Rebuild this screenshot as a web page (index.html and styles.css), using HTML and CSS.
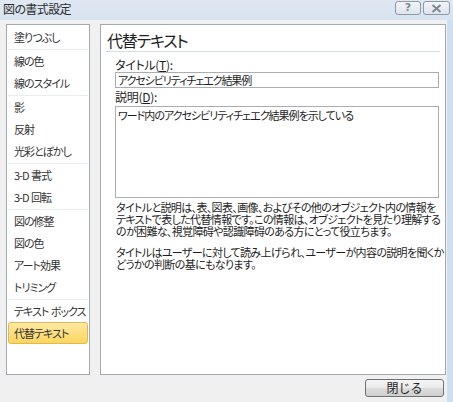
FILE: index.html
```html
<!DOCTYPE html>
<html lang="ja">
<head>
<meta charset="utf-8">
<title>図の書式設定</title>
<link rel="stylesheet" href="styles.css">
</head>
<body>
<div class="window">
  <div class="titlebar">
    <span class="title">図の書式設定</span>
    <div class="ctrls">
      <span class="cbtn help">?</span>
      <span class="cbtn close">
        <svg width="11" height="9" viewBox="0 0 11 9"><path d="M1.5 1 L9.5 8 M9.5 1 L1.5 8" stroke="#7d8894" stroke-width="2" fill="none"/></svg>
      </span>
    </div>
  </div>
  <div class="body">
    <div class="main">
      <nav class="nav">
        <div class="group first">
          <div class="item">塗りつぶし</div>
        </div>
        <div class="group">
          <div class="item">線の色</div>
          <div class="item">線のスタイル</div>
        </div>
        <div class="group">
          <div class="item">影</div>
          <div class="item">反射</div>
          <div class="item">光彩とぼかし</div>
        </div>
        <div class="group">
          <div class="item">3-D 書式</div>
          <div class="item">3-D 回転</div>
        </div>
        <div class="group">
          <div class="item">図の修整</div>
          <div class="item">図の色</div>
          <div class="item">アート効果</div>
          <div class="item">トリミング</div>
        </div>
        <div class="group">
          <div class="item">テキスト ボックス</div>
          <div class="item selected">代替テキスト</div>
        </div>
      </nav>
      <section class="panel">
        <h1 class="heading">代替テキスト</h1>
        <div class="form">
          <div class="label">タイトル(<u>T</u>):</div>
          <div class="input">アクセシビリティチェエク結果例</div>
          <div class="label">説明(<u>D</u>):</div>
          <div class="textarea">ワード内のアクセシビリティチェエク結果例を示している</div>
          <p class="para">タイトルと説明は、表、図表、画像、およびその他のオブジェクト内の情報を<br>テキストで表した代替情報です。この情報は、オブジェクトを見たり理解する<br>のが困難な、視覚障碍や認識障碍のある方にとって役立ちます。</p>
          <p class="para">タイトルはユーザーに対して読み上げられ、ユーザーが内容の説明を聞くか<br>どうかの判断の基にもなります。</p>
        </div>
      </section>
    </div>
    <div class="footer">
      <button class="btn">閉じる</button>
    </div>
  </div>
</div>
</body>
</html>
```

FILE: styles.css
```css
html, body {
  margin: 0;
  padding: 0;
}
body {
  width: 453px;
  height: 402px;
  overflow: hidden;
  font-family: "Noto Sans CJK JP", "Liberation Sans", sans-serif;
  font-feature-settings: "palt";
  color: #1e1e1e;
}
.window {
  width: 453px;
  height: 402px;
  background: linear-gradient(to right, #dce7f3, #cfdff0);
  display: flex;
  flex-direction: column;
}
.titlebar {
  height: 20px;
  display: flex;
  align-items: flex-start;
  justify-content: space-between;
  background: linear-gradient(to bottom, #dfe8f3, #d7e3f0);
}
.title {
  font-size: 12px;
  line-height: 18px;
  padding-left: 3px;
  letter-spacing: -0.6px;
  color: #2a2a2a;
}
.ctrls {
  display: flex;
  gap: 2px;
  padding-top: 1px;
  padding-right: 3px;
}
.cbtn {
  height: 14px;
  border: 1px solid #8e99a6;
  border-radius: 3px;
  background: linear-gradient(to bottom, #f2f5f9, #dde4ec);
  display: flex;
  align-items: center;
  justify-content: center;
  box-sizing: border-box;
}
.help {
  width: 26px;
  font-family: "DejaVu Sans", sans-serif;
  font-size: 11px;
  font-weight: bold;
  color: #7d8894;
  line-height: 12px;
}
.close {
  width: 27px;
}
.body {
  width: 447px;
  flex: 1;
  background: #f0f0f0;
  display: flex;
  flex-direction: column;
}
.main {
  display: flex;
  gap: 10px;
  padding: 4px 0 0 6px;
  height: 351px;
}
.nav {
  width: 84px;
  box-sizing: border-box;
  border: 1px solid #a3a9b0;
  background: #fff;
  padding-top: 1px;
}
.group {
  border-top: 1px solid #e9edf2;
  margin: 1px 1px 0;
}
.group.first {
  border-top: none;
  margin-top: 0;
}
.item {
  height: 22px;
  box-sizing: border-box;
  border: 1px solid transparent;
  padding-left: 5px;
  font-size: 11px;
  letter-spacing: -1px;
  word-spacing: 1px;
  line-height: 20px;
  white-space: nowrap;
  color: #333;
}
.item.selected {
  background: linear-gradient(to bottom, #fde9a3, #fbd55e);
  border-color: #e2b850;
  border-radius: 3px;
}
.panel {
  width: 346px;
  box-sizing: border-box;
  border: 1px solid #a3a9b0;
  background: #fff;
}
.heading {
  margin: 0 5px;
  padding: 5px 0 1px 1px;
  font-size: 16px;
  font-weight: normal;
  letter-spacing: -1.2px;
  line-height: 20px;
  border-bottom: 1px solid #d3dde8;
  color: #1e1e1e;
}
.form {
  padding: 5px 6px 0 14px;
}
.label {
  font-size: 12px;
  line-height: 15px;
  letter-spacing: -0.3px;
  color: #1e1e1e;
}
.input {
  height: 16px;
  box-sizing: border-box;
  border: 1px solid #abadb3;
  font-size: 11px;
  letter-spacing: -1.1px;
  line-height: 14px;
  padding-left: 2px;
  margin-bottom: 1px;
  white-space: nowrap;
}
.textarea {
  height: 92px;
  box-sizing: border-box;
  border: 1px solid #abadb3;
  font-size: 11px;
  letter-spacing: -1px;
  line-height: 14px;
  padding: 1px 2px;
  margin-top: 2px;
}
.para {
  margin: 3px 0 0 1px;
  font-size: 11px;
  line-height: 12px;
  white-space: nowrap;
  letter-spacing: -0.65px;
}
.para + .para {
  margin-top: 9px;
}
.footer {
  display: flex;
  justify-content: flex-end;
  padding: 4px 3px 0 0;
}
.btn {
  width: 79px;
  height: 18px;
  box-sizing: border-box;
  border: 1px solid #707070;
  border-radius: 3px;
  background: linear-gradient(to bottom, #f4f4f4 0%, #ebebeb 50%, #dddddd 51%, #cfcfcf 100%);
  font-family: "Noto Sans CJK JP", sans-serif;
  font-size: 12px;
  line-height: 14px;
  padding: 0;
  color: #1e1e1e;
}
```
